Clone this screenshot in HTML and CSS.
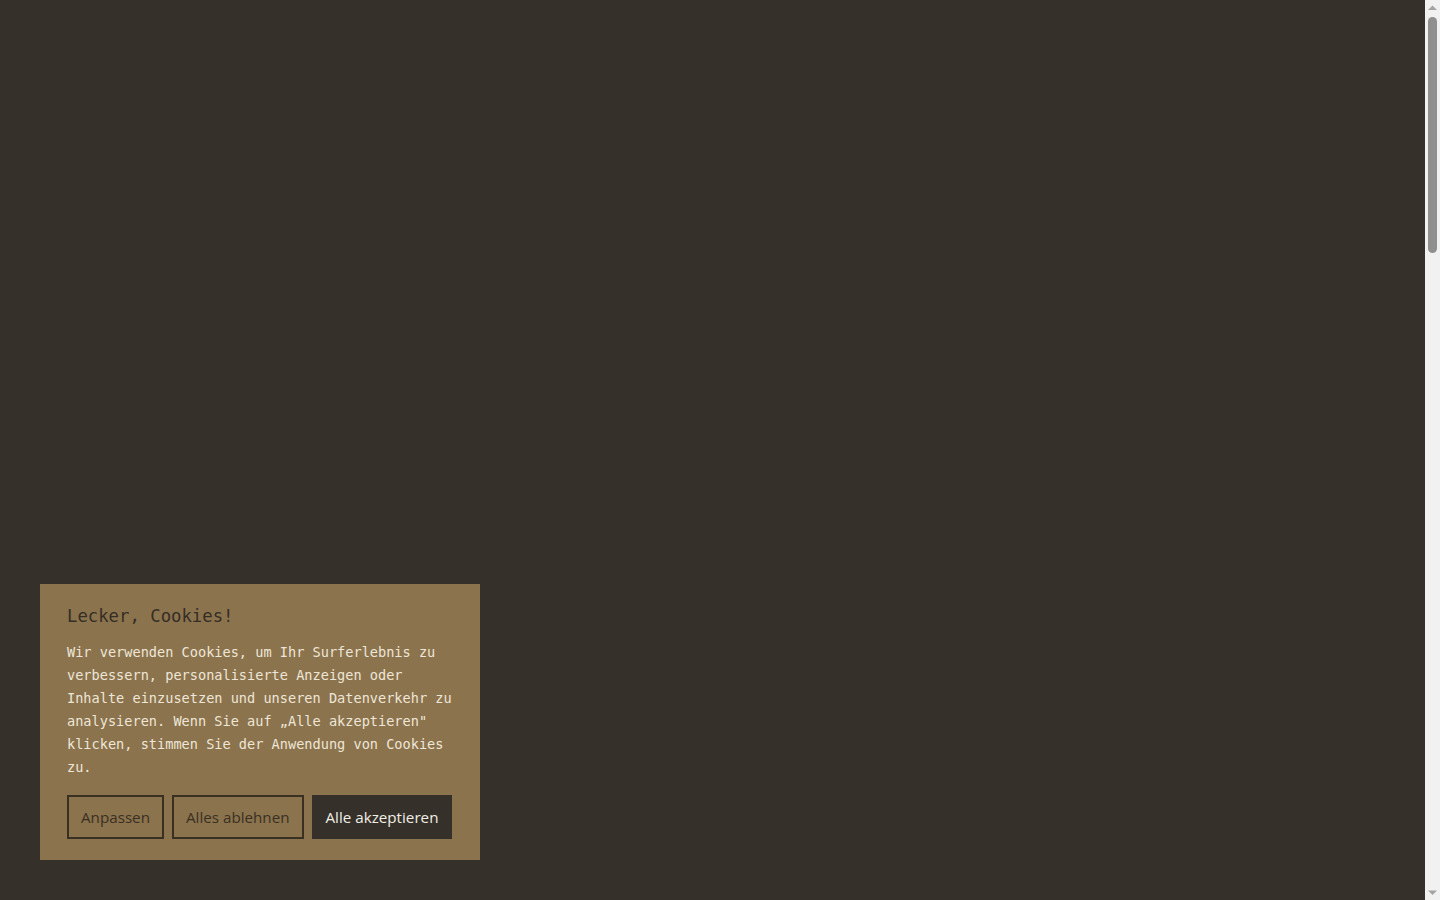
FILE: index.html
```html
<!DOCTYPE html>
<html lang="de">
<head>
<meta charset="utf-8">
<title>Cookies</title>
<link rel="stylesheet" href="styles.css">
</head>
<body>
<main class="page"></main>
<aside class="cookie">
  <h2 class="cookie-title">Lecker, Cookies!</h2>
  <p class="cookie-text">Wir verwenden Cookies, um Ihr Surferlebnis zu verbessern, personalisierte Anzeigen oder Inhalte einzusetzen und unseren Datenverkehr zu analysieren. Wenn Sie auf „Alle akzeptieren" klicken, stimmen Sie der Anwendung von Cookies zu.</p>
  <div class="cookie-actions">
    <button class="btn btn-outline">Anpassen</button>
    <button class="btn btn-outline">Alles ablehnen</button>
    <button class="btn btn-solid">Alle akzeptieren</button>
  </div>
</aside>
<div class="scrollbar" aria-hidden="true">
  <svg class="sb-arrow" width="15" height="15" viewBox="0 0 15 15"><polygon points="3,10 12,10 7.5,5.5" fill="#a3a3a3"/></svg>
  <div class="sb-thumb"></div>
  <svg class="sb-arrow sb-down" width="15" height="15" viewBox="0 0 15 15"><polygon points="3,5.5 12,5.5 7.5,10" fill="#a3a3a3"/></svg>
</div>
</body>
</html>
```
FILE: styles.css
```css
html { background: #35312a; }
body { margin: 0; background: #35312a; }
.page { height: 3262px; }

.scrollbar {
  position: fixed;
  top: 0;
  right: 0;
  width: 15px;
  height: 100vh;
  background: #f1f1f1;
  display: flex;
  flex-direction: column;
}
.sb-arrow { display: block; flex: none; }
.sb-thumb {
  margin: 2px 3px 0;
  height: 236px;
  border-radius: 5px;
  background: #8f8f8f;
}
.sb-down { margin-top: auto; }

.cookie {
  position: fixed;
  left: 40px;
  bottom: 40px;
  width: 440px;
  box-sizing: border-box;
  padding: 19px 27px 21px;
  background: #8b734e;
}
.cookie-title {
  margin: 0 0 12px;
  font-family: "DejaVu Sans Mono", "Liberation Mono", monospace;
  font-size: 17.3px;
  font-weight: normal;
  line-height: 26px;
  color: #352e24;
}
.cookie-text {
  margin: 0 0 16px;
  font-family: "DejaVu Sans Mono", "Liberation Mono", monospace;
  font-size: 13.6px;
  line-height: 23px;
  color: #eee6d6;
}
.cookie-actions { display: flex; gap: 8px; }
.btn {
  height: 44px;
  padding: 0 12px;
  font-family: "Open Sans", "Liberation Sans", sans-serif;
  font-size: 15.2px;
  border: 2px solid #3a3022;
  cursor: pointer;
}
.btn-outline { background: transparent; color: #3a3022; }
.btn-solid { background: #35312a; border-color: #35312a; color: #f2ede4; }
```
